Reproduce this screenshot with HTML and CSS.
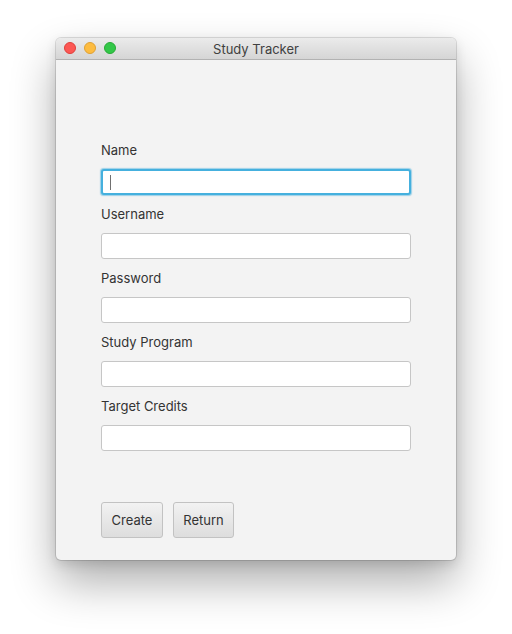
FILE: index.html
```html
<!DOCTYPE html>
<html>
<head>
<meta charset="utf-8">
<link rel="stylesheet" href="styles.css">
</head>
<body>
<div class="window">
  <div class="titlebar">
    <div class="lights">
      <span class="light red"></span>
      <span class="light yellow"></span>
      <span class="light green"></span>
    </div>
    <div class="title">Study Tracker</div>
  </div>
  <div class="content">
    <div class="field">
      <label class="label">Name</label>
      <div class="input focused"><span class="caret"></span></div>
    </div>
    <div class="field">
      <label class="label">Username</label>
      <div class="input"></div>
    </div>
    <div class="field">
      <label class="label">Password</label>
      <div class="input"></div>
    </div>
    <div class="field">
      <label class="label">Study Program</label>
      <div class="input"></div>
    </div>
    <div class="field">
      <label class="label">Target Credits</label>
      <div class="input"></div>
    </div>
    <div class="buttons">
      <button class="btn create">Create</button>
      <button class="btn return">Return</button>
    </div>
  </div>
</div>
</body>
</html>
```

FILE: styles.css
```css
html, body {
  margin: 0;
  padding: 0;
  background: #ffffff;
  width: 512px;
  height: 634px;
  overflow: hidden;
}
body {
  padding: 38px 0 0 56px;
  box-sizing: border-box;
  font-family: Inter, "Noto Sans", "Liberation Sans", sans-serif;
}
.window {
  width: 400px;
  height: 522px;
  background: #f3f3f3;
  border-radius: 5px;
  box-shadow: 0 0 0 1px rgba(0,0,0,0.12), 0 22px 45px rgba(0,0,0,0.32), 0 4px 12px rgba(0,0,0,0.12);
  display: flex;
  flex-direction: column;
  overflow: hidden;
}
.titlebar {
  height: 21px;
  flex: none;
  background: linear-gradient(#ebebeb, #d5d5d5);
  border-bottom: 1px solid #b2b2b2;
  position: relative;
  display: flex;
  align-items: center;
  justify-content: center;
}
.lights {
  position: absolute;
  left: 8px;
  top: 4px;
  display: flex;
  gap: 8px;
}
.light {
  width: 12px;
  height: 12px;
  border-radius: 50%;
  box-sizing: border-box;
}
.red { background: #fc5753; border: 0.5px solid #de3f3a; }
.yellow { background: #fdbc40; border: 0.5px solid #dea034; }
.green { background: #33c748; border: 0.5px solid #27aa35; }
.title {
  font-size: 13px;
  color: #404040;
  line-height: 16px;
}
.content {
  padding: 82px 45px 0 45px;
  display: flex;
  flex-direction: column;
}
.field {
  display: flex;
  flex-direction: column;
  gap: 11px;
  margin-bottom: 11px;
}
.label {
  font-size: 13px;
  line-height: 16px;
  color: #333333;
}
.input {
  width: 310px;
  height: 26px;
  box-sizing: border-box;
  background: #ffffff;
  border: 1px solid #c6c6c6;
  border-radius: 3px;
  position: relative;
}
.input.focused {
  border: 2px solid #45b0de;
  box-shadow: 0 0 1px 0.5px rgba(69,176,222,0.5);
}
.caret {
  position: absolute;
  left: 7px;
  top: 4px;
  width: 1px;
  height: 15px;
  background: #707070;
}
.buttons {
  display: flex;
  gap: 10px;
  margin-top: 40px;
}
.btn {
  height: 36px;
  box-sizing: border-box;
  border: 1px solid #c2c2c2;
  border-radius: 3px;
  background: linear-gradient(#f2f2f2, #dddddd);
  font-family: inherit;
  font-size: 13px;
  color: #333333;
  padding: 0;
}
.create { width: 62px; }
.return { width: 61px; }
```
